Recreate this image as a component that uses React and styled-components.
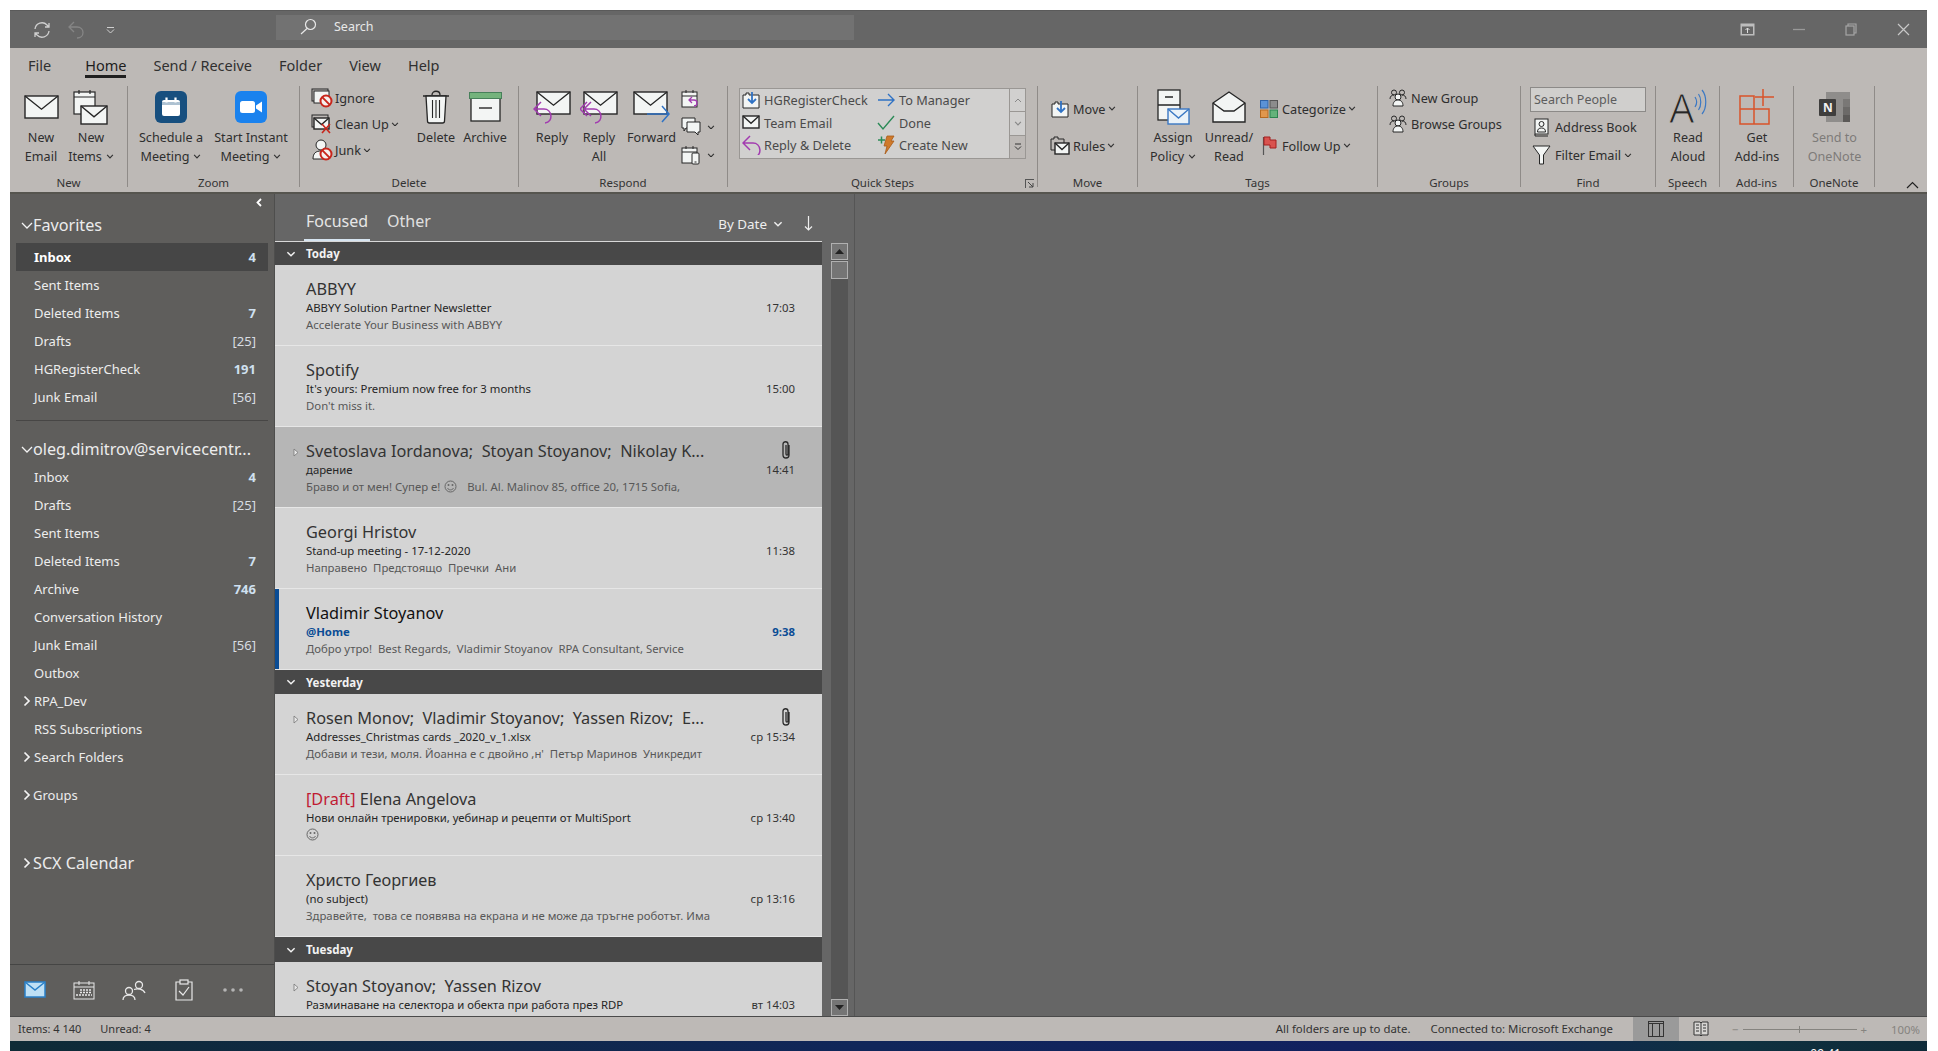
import React from "react";
import styled, { createGlobalStyle } from "styled-components";

const FONT = `"Noto Sans", "Open Sans", "Liberation Sans", sans-serif`;

const GlobalStyle = createGlobalStyle`
  html, body { margin: 0; padding: 0; background: #fff; }
  body { font-family: ${FONT}; overflow: hidden; }
  * { box-sizing: border-box; }
  svg { display: block; flex-shrink: 0; }
`;

/* ---------- icons ---------- */
const INK = "#262626";
const PAPER = "#f3f5f4";

const mail = (x, y, w, h, stroke = INK) => (
  <g>
    <rect x={x} y={y} width={w} height={h} fill={PAPER} stroke={stroke} strokeWidth="1.4" />
    <path d={`M${x} ${y}L${x + w / 2} ${y + h * 0.6}L${x + w} ${y}`} fill="none" stroke={stroke} strokeWidth="1.4" />
  </g>
);

const Chevron = ({ color = "#333", size = 8 }) => (
  <svg width={size} height={size * 0.6} viewBox="0 0 8 5"><path d="M1 1l3 3 3-3" fill="none" stroke={color} strokeWidth="1.2" /></svg>
);

const Svg = ({ w, h, children }) => <svg width={w} height={h} viewBox={`0 0 ${w} ${h}`}>{children}</svg>;

const NewEmailIcon = () => <Svg w={35} h={26}>{mail(1, 2, 33, 22)}</Svg>;
const NewItemsIcon = () => (
  <Svg w={36} h={36}>
    <rect x="1" y="3" width="21" height="22" fill={PAPER} stroke={INK} strokeWidth="1.2" />
    <path d="M1 8h21M6 1v4M17 1v4" stroke={INK} strokeWidth="1.2" />
    {mail(8, 17, 26, 18)}
  </Svg>
);
const ScheduleIcon = () => (
  <Svg w={32} h={32}>
    <rect width="32" height="32" rx="6" fill="#174f7f" />
    <rect x="7" y="9" width="18" height="16" rx="2" fill="#fff" />
    <rect x="7" y="11" width="18" height="3" fill="#174f7f" opacity="0.35" />
    <path d="M11.5 6.5v5M20.5 6.5v5" stroke="#fff" strokeWidth="2.2" />
  </Svg>
);
const StartIcon = () => (
  <Svg w={32} h={32}>
    <rect width="32" height="32" rx="6" fill="#1a82ee" />
    <rect x="5" y="10" width="15" height="12" rx="2.5" fill="#fff" />
    <path d="M21 14.5l6-4v11l-6-4z" fill="#fff" />
  </Svg>
);
const noSign = (cx, cy, r = 5.5) => (
  <g>
    <circle cx={cx} cy={cy} r={r} fill="#f6f0ee" stroke="#c8261c" strokeWidth="2" />
    <path d={`M${cx - r * 0.7} ${cy - r * 0.7}L${cx + r * 0.7} ${cy + r * 0.7}`} stroke="#c8261c" strokeWidth="2" />
  </g>
);
const IgnoreIcon = () => (
  <Svg w={22} h={20}>
    <rect x="1" y="1" width="16" height="12" fill="#bdb9b6" stroke={INK} />
    <rect x="3" y="3" width="15" height="12" fill={PAPER} stroke={INK} />
    {noSign(15, 13)}
  </Svg>
);
const CleanUpIcon = () => (
  <Svg w={22} h={20}>
    <rect x="1" y="1" width="16" height="12" fill="#bdb9b6" stroke={INK} />
    {mail(3, 4, 15, 11)}
    <path d="M11 10l8 9M19 10l-8 9" stroke="#c8261c" strokeWidth="1.6" />
  </Svg>
);
const JunkIcon = () => (
  <Svg w={22} h={22}>
    <circle cx="10" cy="6" r="5" fill={PAPER} stroke={INK} />
    <path d="M2 20c0-6 3-8 8-8s6 2 7 4v4z" fill={PAPER} stroke={INK} />
    {noSign(15, 15)}
  </Svg>
);
const TrashIcon = () => (
  <Svg w={28} h={34}>
    <path d="M1 6h26M10 5c0-5 8-5 8 0" fill="none" stroke={INK} strokeWidth="1.3" />
    <path d="M4 6l1.5 25c0 1 1 2 2 2h13c1 0 2-1 2-2L24 6z" fill={PAPER} stroke={INK} strokeWidth="1.3" />
    <path d="M10.5 10v18M14 10v18M17.5 10v18" stroke={INK} strokeWidth="1.1" />
  </Svg>
);
const ArchiveIcon = () => (
  <Svg w={33} h={30}>
    <rect x="2" y="5" width="29" height="24" fill={PAPER} stroke={INK} strokeWidth="1.3" />
    <rect x="0.5" y="0.5" width="32" height="6" fill="#74b37c" stroke="#47805a" />
    <path d="M10 16h13" stroke={INK} strokeWidth="1.4" />
  </Svg>
);
const replyArrow = (x, y, color = "#a23bb0") => (
  <path d={`M${x + 7} ${y}L${x} ${y + 7}L${x + 7} ${y + 14}M${x} ${y + 7}H${x + 10}C${x + 18} ${y + 7} ${x + 20} ${y + 20} ${x + 11} ${y + 21}`} fill="none" stroke={color} strokeWidth="1.5" />
);
const ReplyIcon = () => <Svg w={38} h={34}>{mail(4, 2, 33, 22)}{replyArrow(1, 12)}</Svg>;
const ReplyAllIcon = () => (
  <Svg w={38} h={34}>
    {mail(4, 2, 33, 22)}
    <path d="M7 12L0 19l7 7" fill="none" stroke="#a23bb0" strokeWidth="1.5" />
    {replyArrow(4, 12)}
  </Svg>
);
const ForwardIcon = () => (
  <Svg w={38} h={34}>
    {mail(1, 2, 33, 22)}
    <path d="M14 24h22M29 16l7 8-7 8" fill="none" stroke="#2f72c4" strokeWidth="1.5" />
  </Svg>
);
const calendarBase = (
  <g>
    <rect x="1" y="3" width="15" height="15" fill={PAPER} stroke={INK} />
    <path d="M1 7h15M5 1v3M12 1v3" stroke={INK} />
  </g>
);
const CalReplyIcon = () => (
  <Svg w={20} h={20}>
    {calendarBase}
    <path d="M11 8l-3 3 3 3M8 11h5c4 0 4 6 0 6" fill="none" stroke="#a23bb0" strokeWidth="1.3" />
  </Svg>
);
const ChatIcon = () => (
  <Svg w={20} h={20}>
    <path d="M1 1h13v10H5l-2 3v-3H1z" fill={PAPER} stroke={INK} />
    <path d="M6 5h13v10h-2v3l-3-3H6z" fill={PAPER} stroke={INK} />
  </Svg>
);
const CalPhoneIcon = () => (
  <Svg w={20} h={20}>
    {calendarBase}
    <rect x="11" y="8" width="7" height="11" rx="1" fill={PAPER} stroke={INK} />
    <path d="M13.5 17h2" stroke={INK} />
  </Svg>
);
const FolderDownIcon = () => (
  <Svg w={18} h={18}>
    <path d="M1 4h3V2h3v2h10v13H1z" fill={PAPER} stroke={INK} />
    <path d="M10 1v11M6 8l4 4 4-4" fill="none" stroke="#2f72c4" strokeWidth="1.8" />
  </Svg>
);
const ArrowRightIcon = () => (
  <Svg w={19} h={16}><path d="M1 8h16M11 2l6 6-6 6" fill="none" stroke="#2f72c4" strokeWidth="1.4" /></Svg>
);
const SmallMailIcon = () => <Svg w={19} h={15}>{mail(1, 1, 16, 12)}</Svg>;
const CheckIcon = () => (
  <Svg w={19} h={16}><path d="M1 8l5 6L17 1" fill="none" stroke="#2b8a57" strokeWidth="1.4" /></Svg>
);
const ReplySmallIcon = () => <Svg w={19} h={20}>{replyArrow(1, 1)}</Svg>;
const BoltIcon = () => (
  <Svg w={19} h={20}>
    <path d="M1 5h7M4.5 1.5v7" stroke="#2b8a57" strokeWidth="1.5" />
    <path d="M10 1h7l-3 5h3L8 19l2-8H7z" fill="#cf7a2c" stroke="#a85a18" strokeWidth="0.8" />
  </Svg>
);
const RulesIcon = () => (
  <Svg w={20} h={19}>
    <path d="M1 3h3V1h4v2h6v11H1z" fill="#bdb9b6" stroke={INK} />
    {mail(5, 7, 14, 11)}
  </Svg>
);
const PolicyIcon = () => (
  <Svg w={33} h={36}>
    <rect x="1" y="1" width="22" height="30" fill={PAPER} stroke={INK} strokeWidth="1.3" />
    <path d="M1 16h22M8 8h8" stroke={INK} strokeWidth="1.3" />
    <rect x="11" y="20" width="21" height="15" fill="#eaf2f8" stroke="#3a78c4" strokeWidth="1.4" />
    <path d="M11 20l10.5 9L32 20" fill="none" stroke="#3a78c4" strokeWidth="1.4" />
  </Svg>
);
const UnreadIcon = () => (
  <Svg w={34} h={32}>
    <path d="M1 12L17 1l16 11v19H1z" fill={PAPER} stroke={INK} strokeWidth="1.4" />
    <path d="M1 12l11 8h10l11-8" fill="none" stroke={INK} strokeWidth="1.4" />
  </Svg>
);
const CategorizeIcon = () => (
  <Svg w={18} h={18}>
    <rect x="0.5" y="0.5" width="7.5" height="7.5" fill="#5b92d6" stroke="#2f62a6" />
    <rect x="10" y="0.5" width="7.5" height="7.5" fill="#8c8c8c" stroke="#555" />
    <rect x="0.5" y="10" width="7.5" height="7.5" fill="#e0974e" stroke="#b56a22" />
    <rect x="10" y="10" width="7.5" height="7.5" fill="#63b27a" stroke="#2c8450" />
  </Svg>
);
const FlagIcon = () => (
  <Svg w={15} h={19}>
    <path d="M1.5 1v18" stroke="#555" strokeWidth="1.2" />
    <path d="M2 1h6v3h6v8H8V9H2z" fill="#d9534f" stroke="#a42020" />
  </Svg>
);
const PeopleIcon = () => (
  <Svg w={18} h={18}>
    <circle cx="5" cy="3.5" r="2.5" fill="none" stroke={INK} />
    <circle cx="13" cy="3.5" r="2.5" fill="none" stroke={INK} />
    <path d="M1 10c0-3 2-4 4-4M17 10c0-3-2-4-4-4" fill="none" stroke={INK} />
    <circle cx="9" cy="8" r="3" fill={PAPER} stroke={INK} />
    <path d="M4 17c0-4 2-6 5-6s5 2 5 6z" fill={PAPER} stroke={INK} />
  </Svg>
);
const BookIcon = () => (
  <Svg w={15} h={19}>
    <rect x="1" y="1" width="13" height="15" fill={PAPER} stroke={INK} />
    <path d="M1 16v2h13" fill="none" stroke={INK} />
    <circle cx="7.5" cy="6" r="2.5" fill="none" stroke={INK} />
    <path d="M3.5 14c0-3 1.5-4 4-4s4 1 4 4z" fill="none" stroke={INK} />
  </Svg>
);
const FunnelIcon = () => (
  <Svg w={19} h={20}>
    <path d="M1 1h17l-6.5 9v9h-4v-9z" fill={PAPER} stroke={INK} />
  </Svg>
);
const ReadAloudIcon = () => (
  <Svg w={38} h={38}>
    <text x="0" y="35" fontFamily={FONT} fontSize="40" fontWeight="400" fill={INK} stroke="#bdb9b6" strokeWidth="1.1">A</text>
    <path d="M26 9c2 3 2 7 0 10M29.5 6c3 4 3 12 0 16M33 2c5 6 5 18 0 24" fill="none" stroke="#3a78c4" strokeWidth="1.2" />
  </Svg>
);
const AddinsIcon = () => (
  <Svg w={36} h={36}>
    <path d="M1 7h14v13h15v15H1zM1 20h14v15" fill="none" stroke="#d9532a" strokeWidth="1.5" />
    <path d="M24 0v17M16 8h19" stroke="#d9532a" strokeWidth="1.5" />
  </Svg>
);
const OneNoteIcon = () => (
  <Svg w={32} h={32}>
    <rect x="7" y="1" width="24" height="30" fill="#8f8d8b" />
    <rect x="24" y="8" width="7" height="8" fill="#7a7876" />
    <rect x="24" y="16" width="7" height="8" fill="#6c6a68" />
    <rect x="24" y="24" width="7" height="7" fill="#5b5957" />
    <rect x="0" y="8" width="17" height="17" rx="1" fill="#3f3e3d" />
    <text x="4" y="21" fontFamily={FONT} fontSize="12" fontWeight="700" fill="#f2f2f2">N</text>
  </Svg>
);
const Smiley = () => (
  <Svg w={13} h={13}>
    <circle cx="6.5" cy="6.5" r="5.5" fill="none" stroke="#666" />
    <circle cx="4.5" cy="5" r="1" fill="#666" />
    <circle cx="8.5" cy="5" r="1" fill="#666" />
    <path d="M3.5 8c1 2.5 5 2.5 6 0" fill="none" stroke="#666" />
  </Svg>
);
const Clip = () => (
  <svg width="12" height="20" viewBox="0 0 12 20">
    <path d="M9 5v10c0 4-6 4-6 0V4c0-3 5-3 5 0v10c0 1.5-2 1.5-2 0V5" fill="none" stroke="#2a2a2a" strokeWidth="1.3" />
  </svg>
);
const Expander = () => (
  <svg width="6" height="9" viewBox="0 0 6 9"><path d="M1 1l4 3.5-4 3.5z" fill="#e8e8e8" stroke="#777" strokeWidth="0.8" /></svg>
);
const FolderChevron = ({ open, big }) => (
  <svg width="12" height={big ? 14 : 12} viewBox="0 0 12 12">
    <path d={open ? "M1 4l5 5 5-5" : "M3.5 1.5L8 6l-4.5 4.5"} fill="none" stroke="#f4f4f4" strokeWidth={open ? 1.3 : 1.7} />
  </svg>
);

/* ---------- window ---------- */
const Page = styled.div`
  width: 1938px;
  height: 1051px;
  padding: 10px 11px 0 10px;
  display: flex;
  flex-direction: column;
  background: #fff;
`;

const Desktop = styled.div`
  height: 10px;
  flex-shrink: 0;
  display: flex;
  justify-content: flex-end;
  overflow: hidden;
  padding-right: 86px;
  background: linear-gradient(90deg, #0f2b36 0%, #10265a 45%, #12215f 70%, #0f3140 90%, #0e2a38 100%);
`;

const ClockPeek = styled.span`
  font-size: 12px;
  line-height: 16px;
  margin-top: 5px;
  color: #fff;
`;

const TitleBar = styled.div`
  height: 38px;
  flex-shrink: 0;
  display: flex;
  align-items: center;
  background: #666;
  border-top: 1px solid #5a5a5a;
`;

const Qat = styled.div`
  width: 266px;
  padding-left: 15px;
  display: flex;
  align-items: center;
`;

const QatButton = styled.div`
  width: 34px;
  display: flex;
  justify-content: center;
  opacity: ${(p) => (p.$dim ? 0.3 : 1)};
`;

const SearchBox = styled.div`
  width: 578px;
  height: 25px;
  margin-top: -4px;
  padding: 0 0 2px 24px;
  display: flex;
  align-items: center;
  gap: 17px;
  background: #727272;
  color: #e8e8e8;
  font-size: 12.5px;
`;

const WindowControls = styled.div`
  margin-left: auto;
  display: flex;
  gap: 4px;
`;

const ControlButton = styled.div`
  width: 48px;
  display: flex;
  justify-content: center;
`;

/* ---------- ribbon ---------- */
const Ribbon = styled.div`
  height: 144px;
  flex-shrink: 0;
  position: relative;
  z-index: 1;
  background: #bdb9b6;
  color: #2e2e2e;
  box-shadow: 0 2px 0 #56554f;
`;

const Tabs = styled.div`
  height: 38px;
  padding: 1px 0 0 18px;
  display: flex;
  align-items: flex-start;
  gap: 27px;
  font-size: 14.5px;
`;

const Tab = styled.div`
  height: 29px;
  line-height: 32px;
  margin-left: ${(p) => (p.$active ? 7 : 0)}px;
  color: ${(p) => (p.$active ? "#1d1d1d" : "#303030")};
  border-bottom: ${(p) => (p.$active ? "3px solid #1f1f1f" : "none")};
`;

const Groups = styled.div`
  display: flex;
  height: 101px;
`;

const Group = styled.section`
  width: ${(p) => p.$w}px;
  flex-shrink: 0;
  display: flex;
  flex-direction: column;
  position: relative;
  border-right: 1px solid #8f8b88;
`;

const GroupBody = styled.div`
  flex: 1;
  min-height: 0;
  display: flex;
  padding-left: ${(p) => p.$pad || 0}px;
`;

const GroupLabel = styled.div`
  height: 16px;
  margin-bottom: -4px;
  line-height: 16px;
  text-align: center;
  font-size: 11.5px;
  color: #333;
`;

const BigButton = styled.div`
  width: ${(p) => p.$w}px;
  flex-shrink: 0;
  display: flex;
  flex-direction: column;
  align-items: center;
  color: ${(p) => (p.$dim ? "#7d7b79" : "inherit")};
`;

const BigIcon = styled.div`
  height: 42px;
  display: flex;
  align-items: center;
  justify-content: center;
`;

const BigLabel = styled.div`
  font-size: 12.6px;
  line-height: 19px;
  text-align: center;
  white-space: nowrap;
  display: flex;
  flex-direction: column;
  align-items: center;
`;

const LabelLine = styled.span`
  display: flex;
  align-items: center;
  gap: 4px;
`;

const Stack = styled.div`
  width: ${(p) => (p.$w ? `${p.$w}px` : "auto")};
  display: flex;
  flex-direction: column;
  padding-top: ${(p) => p.$top || 0}px;
  margin-top: ${(p) => p.$up || 0}px;
`;

const SmallItem = styled.div`
  height: ${(p) => p.$h || 26}px;
  display: flex;
  align-items: center;
  gap: ${(p) => p.$gap ?? 2}px;
  font-size: 12.7px;
  white-space: nowrap;
`;

const SmallIconSlot = styled.span`
  width: ${(p) => p.$w || 22}px;
  display: flex;
  justify-content: center;
`;

const Gallery = styled.div`
  width: 287px;
  height: 71px;
  margin: 2px 0 0 11px;
  display: flex;
  background: #d1d0cf;
  border: 1px solid #9a9794;
`;

const GalleryGrid = styled.div`
  flex: 1;
  display: grid;
  grid-template-columns: 135px 1fr;
  grid-auto-rows: 22.5px;
  color: #4a4a4a;
  font-size: 12.7px;
`;

const GalleryItem = styled.div`
  display: flex;
  align-items: center;
  gap: 2px;
  white-space: nowrap;
`;

const GalleryScroll = styled.div`
  width: 16px;
  display: flex;
  flex-direction: column;
  border-left: 1px solid #9a9794;
`;

const GalleryArrow = styled.div`
  flex: 1;
  display: flex;
  align-items: center;
  justify-content: center;
  background: ${(p) => (p.$solid ? "#bdb9b6" : "transparent")};
  border-bottom: ${(p) => (p.$solid ? "none" : "1px solid #9a9794")};
`;

const Launcher = styled.div`
  position: absolute;
  right: 3px;
  bottom: -1px;
  width: 9px;
  height: 9px;
  border-left: 1px solid #555;
  border-top: 1px solid #555;
`;

const PeopleSearch = styled.div`
  width: 116px;
  height: 25px;
  margin: 1px 0 1px;
  padding-left: 3px;
  line-height: 23px;
  font-size: 12.5px;
  color: #5d5d5d;
  background: #d0cfcd;
  border: 1px solid #8c8a88;
`;

const Collapse = styled.div`
  position: absolute;
  right: 8px;
  bottom: 3px;
`;

/* ---------- main area ---------- */
const Main = styled.main`
  flex: 1;
  min-height: 0;
  display: flex;
  background: #666;
`;

const Sidebar = styled.nav`
  width: 265px;
  flex-shrink: 0;
  padding-left: 6px;
  display: flex;
  flex-direction: column;
  background: #5f5e5c;
  color: #ededed;
  border-right: 1px solid #4e4e4d;
`;

const SidebarCollapse = styled.div`
  height: 17px;
  padding: 6px 12px 0 0;
  display: flex;
  justify-content: flex-end;
`;

const FolderHead = styled.div`
  height: ${(p) => p.$h || 28}px;
  display: flex;
  align-items: center;
  margin-top: ${(p) => p.$mt || 0}px;
  margin-bottom: ${(p) => p.$mb || 0}px;
  padding-left: 5px;
  width: 252px;
  font-size: ${(p) => (p.$big ? 16.2 : 13)}px;
  color: #ececec;
  white-space: nowrap;
`;

const FolderRow = styled.div`
  width: 252px;
  height: 28px;
  padding: 0 12px 0 18px;
  display: flex;
  align-items: center;
  justify-content: space-between;
  font-size: 13px;
  font-weight: ${(p) => (p.$selected ? 700 : 400)};
  color: ${(p) => (p.$selected ? "#fff" : "#ededed")};
  background: ${(p) => (p.$selected ? "#464646" : "transparent")};
`;

const FolderCount = styled.span`
  font-weight: ${(p) => (p.$bracket ? 400 : 700)};
  color: ${(p) => (p.$bracket ? "#d8dde2" : "#cfe0f0")};
`;

const FolderTitle = styled.span`
  display: flex;
  align-items: center;
  margin-left: ${(p) => (p.$indent ? -13 : 0)}px;
  gap: 1px;
`;

const SidebarRule = styled.div`
  width: 252px;
  height: 1px;
  margin: 9px 0 14px;
  background: #474645;
`;

const NavBar = styled.div`
  margin-top: auto;
  margin-left: -6px;
  height: 52px;
  padding-bottom: 2px;
  display: flex;
  align-items: center;
  border-top: 1px solid #454544;
`;

const NavButton = styled.div`
  width: 49.6px;
  display: flex;
  justify-content: center;
`;

const ListPane = styled.section`
  width: 580px;
  flex-shrink: 0;
  display: flex;
  flex-direction: column;
  background: #666;
  border-right: 1px solid #555;
`;

const ListHead = styled.div`
  width: 547px;
  height: 50px;
  flex-shrink: 0;
  padding-left: 29px;
  display: flex;
  align-items: stretch;
  color: #eee;
  border-bottom: 1px solid #d8d8d8;
`;

const ListTab = styled.div`
  margin-right: 15px;
  padding: 16px 2px 0;
  font-size: 16px;
  line-height: 26px;
  color: ${(p) => (p.$active ? "#e6e6e6" : "#e0e0e0")};
  border-bottom: ${(p) => (p.$active ? "2px solid #d6e4f0" : "none")};
`;

const SortBox = styled.div`
  margin-left: auto;
  padding: 18px 9px 0 0;
  display: flex;
  align-items: flex-start;
  gap: 6px;
  font-size: 13.4px;
  line-height: 28px;
`;

const SortChevron = styled.span`
  padding-top: 11px;
  margin-right: 15px;
`;

const SortArrow = styled.span`
  padding-top: 6px;
`;

const ListBody = styled.div`
  flex: 1;
  min-height: 0;
  display: flex;
`;

const Messages = styled.div`
  width: 547px;
  flex-shrink: 0;
  overflow: hidden;
`;

const DateBar = styled.div`
  height: ${(p) => p.$h || 24}px;
  padding-left: 11px;
  display: flex;
  align-items: center;
  gap: 10px;
  background: #484848;
  color: #f2f2f2;
  font-size: 11.5px;
  font-weight: 700;
`;

const Message = styled.article`
  height: 81px;
  display: flex;
  background: ${(p) => (p.$selected ? "#b6b6b6" : "#d4d4d4")};
  border-bottom: 1px solid #e6e6e6;
  box-shadow: ${(p) => (p.$unread ? "inset 4px 0 0 #0a4c94" : "none")};
`;

const Gutter = styled.div`
  width: 31px;
  flex-shrink: 0;
  padding: 21px 0 0 18px;
`;

const MessageBody = styled.div`
  flex: 1;
  min-width: 0;
  padding-top: 13px;
`;

const Sender = styled.div`
  height: 21px;
  line-height: 23px;
  font-size: 16.3px;
  color: ${(p) => (p.$unread ? "#111" : "#333")};
  white-space: pre;
`;

const DraftTag = styled.span`
  color: #c01b33;
`;

const Subject = styled.div`
  height: 17px;
  line-height: 17px;
  font-size: 11.35px;
  font-weight: ${(p) => (p.$unread ? 700 : 400)};
  color: ${(p) => (p.$unread ? "#0a4c94" : "#262626")};
  white-space: pre;
`;

const Preview = styled.div`
  height: 17px;
  display: flex;
  align-items: center;
  gap: 4px;
  font-size: 11.35px;
  color: #585858;
  white-space: pre;
`;

const MessageSide = styled.div`
  width: 100px;
  flex-shrink: 0;
  padding: 13px 27px 0 0;
  display: flex;
  flex-direction: column;
  align-items: flex-end;
`;

const ClipSlot = styled.div`
  height: 21px;
  padding-right: 3px;
`;

const Time = styled.div`
  height: 17px;
  line-height: 17px;
  font-size: 11.35px;
  font-weight: ${(p) => (p.$unread ? 700 : 400)};
  color: ${(p) => (p.$unread ? "#0a4c94" : "#333")};
`;

const Scrollbar = styled.div`
  width: 17px;
  margin: 1px 0 0 9px;
  display: flex;
  flex-direction: column;
  background: #555;
`;

const ScrollBtn = styled.div`
  height: ${(p) => p.$h}px;
  flex-shrink: 0;
  margin-bottom: ${(p) => p.$mb || 0}px;
  margin-top: ${(p) => (p.$end ? "auto" : 0)};
  display: flex;
  align-items: center;
  justify-content: center;
  background: #757575;
  border: 1px solid #b0b0b0;
`;

const ReadingPane = styled.div`
  flex: 1;
  background: #666;
`;

/* ---------- status ---------- */
const StatusBar = styled.footer`
  height: 25px;
  flex-shrink: 0;
  display: flex;
  align-items: stretch;
  padding-left: 8px;
  background: #bdb9b6;
  color: #333;
  font-size: 11px;
  border-top: 1px solid #4a4a4a;
`;

const StatusText = styled.span`
  line-height: 23px;
  margin-right: ${(p) => p.$mr || 0}px;
  white-space: nowrap;
`;

const StatusRight = styled.div`
  margin-left: auto;
  display: flex;
  align-items: stretch;
  font-size: 11.4px;
`;

const ViewButton = styled.div`
  width: 45.5px;
  display: flex;
  align-items: center;
  justify-content: center;
  background: ${(p) => (p.$active ? "#9a9a9a" : "transparent")};
`;

const ZoomArea = styled.div`
  width: 203px;
  padding: 0 7px 0 8px;
  display: flex;
  align-items: center;
  gap: 4px;
  color: #85837f;
`;

const ZoomTrack = styled.div`
  width: 114px;
  height: 1px;
  background: #85837f;
  position: relative;
`;

const ZoomTick = styled.span`
  position: absolute;
  left: 56px;
  top: -3px;
  width: 1px;
  height: 7px;
  background: #85837f;
`;

const ZoomPct = styled.span`
  margin-left: auto;
`;

/* ---------- data ---------- */
const favorites = [
  { name: "Inbox", count: "4", selected: true },
  { name: "Sent Items" },
  { name: "Deleted Items", count: "7" },
  { name: "Drafts", count: "[25]" },
  { name: "HGRegisterCheck", count: "191" },
  { name: "Junk Email", count: "[56]" },
];

const accountFolders = [
  { name: "Inbox", count: "4" },
  { name: "Drafts", count: "[25]" },
  { name: "Sent Items" },
  { name: "Deleted Items", count: "7" },
  { name: "Archive", count: "746" },
  { name: "Conversation History" },
  { name: "Junk Email", count: "[56]" },
  { name: "Outbox" },
  { name: "RPA_Dev", closed: true },
  { name: "RSS Subscriptions" },
  { name: "Search Folders", closed: true },
];

const today = [
  { sender: "ABBYY", subject: "ABBYY Solution Partner Newsletter", preview: "Accelerate Your Business with ABBYY", time: "17:03" },
  { sender: "Spotify", subject: "It's yours: Premium now free for 3 months", preview: "Don't miss it.", time: "15:00" },
  {
    sender: "Svetoslava Iordanova;  Stoyan Stoyanov;  Nikolay K...",
    subject: "дарение",
    preview: "Браво и от мен! Супер е!",
    smiley: true,
    previewEnd: "  Bul. Al. Malinov 85, office 20, 1715 Sofia,",
    time: "14:41",
    thread: true,
    clip: true,
    selected: true,
  },
  { sender: "Georgi Hristov", subject: "Stand-up meeting - 17-12-2020", preview: "Направено  Предстоящо  Пречки  Ани", time: "11:38" },
  { sender: "Vladimir Stoyanov", subject: "@Home", preview: "Добро утро!  Best Regards,  Vladimir Stoyanov  RPA Consultant, Service", time: "9:38", unread: true },
];

const yesterday = [
  {
    sender: "Rosen Monov;  Vladimir Stoyanov;  Yassen Rizov;  E...",
    subject: "Addresses_Christmas cards _2020_v_1.xlsx",
    preview: "Добави и тези, моля. Йоанна е с двойно ,н'  Петър Маринов  Уникредит",
    time: "ср 15:34",
    thread: true,
    clip: true,
  },
  { draft: true, sender: " Elena Angelova", subject: "Нови онлайн тренировки, уебинар и рецепти от MultiSport", smiley: true, time: "ср 13:40" },
  { sender: "Христо Георгиев", subject: "(no subject)", preview: "Здравейте,  това се появява на екрана и не може да тръгне роботът. Има", time: "ср 13:16" },
];

const tuesday = [
  { sender: "Stoyan Stoyanov;  Yassen Rizov", subject: "Разминаване на селектора и обекта при работа през RDP", time: "вт 14:03", thread: true },
];

/* ---------- pieces ---------- */
function Folder({ item }) {
  const bracket = item.count && item.count.startsWith("[");
  return (
    <FolderRow $selected={item.selected}>
      <FolderTitle $indent={item.closed}>
        {item.closed && <FolderChevron />}
        {item.name}
      </FolderTitle>
      {item.count && <FolderCount $bracket={bracket}>{item.count}</FolderCount>}
    </FolderRow>
  );
}

function MessageRow({ m }) {
  return (
    <Message $selected={m.selected} $unread={m.unread}>
      <Gutter>{m.thread && <Expander />}</Gutter>
      <MessageBody>
        <Sender $unread={m.unread}>
          {m.draft && <DraftTag>[Draft]</DraftTag>}
          {m.sender}
        </Sender>
        <Subject $unread={m.unread}>{m.subject}</Subject>
        <Preview>
          {m.preview}
          {m.smiley && <Smiley />}
          {m.previewEnd}
        </Preview>
      </MessageBody>
      <MessageSide>
        <ClipSlot>{m.clip && <Clip />}</ClipSlot>
        <Time $unread={m.unread}>{m.time}</Time>
      </MessageSide>
    </Message>
  );
}

function DateHeader({ label, h }) {
  return (
    <DateBar $h={h}>
      <Chevron color="#f2f2f2" size={10} />
      {label}
    </DateBar>
  );
}

function Big({ w, icon, lines, caret, dim }) {
  return (
    <BigButton $w={w} $dim={dim}>
      <BigIcon>{icon}</BigIcon>
      <BigLabel>
        {lines.map((line, i) => (
          <LabelLine key={line}>
            {line}
            {caret && i === lines.length - 1 && <Chevron />}
          </LabelLine>
        ))}
      </BigLabel>
    </BigButton>
  );
}

function Small({ icon, label, caret, h, w, gap }) {
  return (
    <SmallItem $h={h} $gap={gap}>
      <SmallIconSlot $w={w}>{icon}</SmallIconSlot>
      {label}
      {caret && <Chevron />}
    </SmallItem>
  );
}

export default function App() {
  return (
    <Page>
      <GlobalStyle />
      <TitleBar>
        <Qat>
          <QatButton>
            <svg width="18" height="18" viewBox="0 0 18 18" fill="none" stroke="#cfcfcf" strokeWidth="1.3">
              <path d="M2 8a7 7 0 0 1 12-4l2 2M16 2v4h-4M16 10a7 7 0 0 1-12 4l-2-2M2 16v-4h4" />
            </svg>
          </QatButton>
          <QatButton $dim>
            <svg width="17" height="18" viewBox="0 0 17 18" fill="none" stroke="#cfcfcf" strokeWidth="1.3">
              <path d="M6 1L1 6l5 5M1 6h8c8 0 8 11 0 11" />
            </svg>
          </QatButton>
          <QatButton>
            <svg width="9" height="8" viewBox="0 0 9 8" fill="none" stroke="#d0d0d0"><path d="M1 1.5h7M1 3.5l3.5 3.5L8 3.5" /></svg>
          </QatButton>
        </Qat>
        <SearchBox>
          <svg width="17" height="17" viewBox="0 0 17 17" fill="none" stroke="#e8e8e8" strokeWidth="1.2">
            <circle cx="10.5" cy="6.5" r="5" />
            <path d="M7 10.5L1 16" />
          </svg>
          Search
        </SearchBox>
        <WindowControls>
          <ControlButton>
            <svg width="15" height="13" viewBox="0 0 15 13">
              <rect x="0.5" y="0.5" width="14" height="12" fill="#bdbdbd" />
              <rect x="2" y="3.5" width="11" height="7.5" fill="#666" />
              <path d="M7.5 10V5M5.5 7l2-2 2 2" fill="none" stroke="#ddd" />
            </svg>
          </ControlButton>
          <ControlButton>
            <svg width="12" height="12" viewBox="0 0 12 12"><path d="M0 6.5h12" stroke="#999" strokeWidth="1.3" /></svg>
          </ControlButton>
          <ControlButton>
            <svg width="12" height="13" viewBox="0 0 12 13" fill="none" stroke="#a5a5a5" strokeWidth="1.2">
              <rect x="1" y="3" width="8" height="9" />
              <path d="M3 3V1h8v9H9" />
            </svg>
          </ControlButton>
          <ControlButton>
            <svg width="13" height="13" viewBox="0 0 13 13"><path d="M1 1l11 11M12 1L1 12" stroke="#c8c8c8" strokeWidth="1.2" /></svg>
          </ControlButton>
        </WindowControls>
      </TitleBar>

      <Ribbon>
        <Tabs>
          <Tab>File</Tab>
          <Tab $active>Home</Tab>
          <Tab>Send / Receive</Tab>
          <Tab>Folder</Tab>
          <Tab>View</Tab>
          <Tab>Help</Tab>
        </Tabs>
        <Groups>
          <Group $w={118}>
            <GroupBody $pad={6}>
              <Big w={50} icon={<NewEmailIcon />} lines={["New", "Email"]} />
              <Big w={50} icon={<NewItemsIcon />} lines={["New", "Items"]} caret />
            </GroupBody>
            <GroupLabel>New</GroupLabel>
          </Group>
          <Group $w={172}>
            <GroupBody $pad={2}>
              <Big w={82} icon={<ScheduleIcon />} lines={["Schedule a", "Meeting"]} caret />
              <Big w={78} icon={<StartIcon />} lines={["Start Instant", "Meeting"]} caret />
            </GroupBody>
            <GroupLabel>Zoom</GroupLabel>
          </Group>
          <Group $w={219}>
            <GroupBody $pad={11}>
              <Stack $w={100} $up={-1}>
                <Small icon={<IgnoreIcon />} label="Ignore" />
                <Small icon={<CleanUpIcon />} label="Clean Up" caret />
                <Small icon={<JunkIcon />} label="Junk" caret />
              </Stack>
              <Big w={50} icon={<TrashIcon />} lines={["Delete"]} />
              <Big w={48} icon={<ArchiveIcon />} lines={["Archive"]} />
            </GroupBody>
            <GroupLabel>Delete</GroupLabel>
          </Group>
          <Group $w={209}>
            <GroupBody $pad={10}>
              <Big w={46} icon={<ReplyIcon />} lines={["Reply"]} />
              <Big w={48} icon={<ReplyAllIcon />} lines={["Reply", "All"]} />
              <Big w={57} icon={<ForwardIcon />} lines={["Forward"]} />
              <Stack $up={-1}>
                <Small icon={<CalReplyIcon />} h={28} />
                <Small icon={<ChatIcon />} caret h={28} gap={5} />
                <Small icon={<CalPhoneIcon />} caret h={28} gap={5} />
              </Stack>
            </GroupBody>
            <GroupLabel>Respond</GroupLabel>
          </Group>
          <Group $w={310}>
            <GroupBody>
              <Gallery>
                <GalleryGrid>
                  <GalleryItem><SmallIconSlot><FolderDownIcon /></SmallIconSlot>HGRegisterCheck</GalleryItem>
                  <GalleryItem><SmallIconSlot><ArrowRightIcon /></SmallIconSlot>To Manager</GalleryItem>
                  <GalleryItem><SmallIconSlot><SmallMailIcon /></SmallIconSlot>Team Email</GalleryItem>
                  <GalleryItem><SmallIconSlot><CheckIcon /></SmallIconSlot>Done</GalleryItem>
                  <GalleryItem><SmallIconSlot><ReplySmallIcon /></SmallIconSlot>Reply &amp; Delete</GalleryItem>
                  <GalleryItem><SmallIconSlot><BoltIcon /></SmallIconSlot>Create New</GalleryItem>
                </GalleryGrid>
                <GalleryScroll>
                  <GalleryArrow><svg width="8" height="5" viewBox="0 0 8 5"><path d="M1 4l3-3 3 3" fill="none" stroke="#888" /></svg></GalleryArrow>
                  <GalleryArrow><Chevron color="#888" /></GalleryArrow>
                  <GalleryArrow $solid><svg width="8" height="8" viewBox="0 0 8 8" fill="none" stroke="#333"><path d="M1 1h6M1 3.5l3 3 3-3" /></svg></GalleryArrow>
                </GalleryScroll>
              </Gallery>
              <Launcher>
                <svg width="8" height="8" viewBox="0 0 8 8"><path d="M2 2l5 5M7 3v4H3" fill="none" stroke="#444" /></svg>
              </Launcher>
            </GroupBody>
            <GroupLabel>Quick Steps</GroupLabel>
          </Group>
          <Group $w={100}>
            <GroupBody $pad={11}>
              <Stack $top={4}>
                <Small icon={<FolderDownIcon />} label="Move" caret h={37} />
                <Small icon={<RulesIcon />} label="Rules" caret h={37} />
              </Stack>
            </GroupBody>
            <GroupLabel>Move</GroupLabel>
          </Group>
          <Group $w={240}>
            <GroupBody $pad={8}>
              <Big w={54} icon={<PolicyIcon />} lines={["Assign", "Policy"]} caret />
              <Big w={58} icon={<UnreadIcon />} lines={["Unread/", "Read"]} />
              <Stack $top={4}>
                <Small icon={<CategorizeIcon />} label="Categorize" caret h={37} />
                <Small icon={<FlagIcon />} label="Follow Up" caret h={37} />
              </Stack>
            </GroupBody>
            <GroupLabel>Tags</GroupLabel>
          </Group>
          <Group $w={143}>
            <GroupBody $pad={9}>
              <Stack $up={-1}>
                <Small icon={<PeopleIcon />} label="New Group" />
                <Small icon={<PeopleIcon />} label="Browse Groups" />
              </Stack>
            </GroupBody>
            <GroupLabel>Groups</GroupLabel>
          </Group>
          <Group $w={135}>
            <GroupBody $pad={9}>
              <Stack>
                <PeopleSearch>Search People</PeopleSearch>
                <Small icon={<BookIcon />} label="Address Book" h={28} gap={3} />
                <Small icon={<FunnelIcon />} label="Filter Email" caret h={28} gap={3} />
              </Stack>
            </GroupBody>
            <GroupLabel>Find</GroupLabel>
          </Group>
          <Group $w={64}>
            <GroupBody>
              <Big w={64} icon={<ReadAloudIcon />} lines={["Read", "Aloud"]} />
            </GroupBody>
            <GroupLabel>Speech</GroupLabel>
          </Group>
          <Group $w={74}>
            <GroupBody>
              <Big w={74} icon={<AddinsIcon />} lines={["Get", "Add-ins"]} />
            </GroupBody>
            <GroupLabel>Add-ins</GroupLabel>
          </Group>
          <Group $w={81}>
            <GroupBody>
              <Big w={81} dim icon={<OneNoteIcon />} lines={["Send to", "OneNote"]} />
            </GroupBody>
            <GroupLabel>OneNote</GroupLabel>
          </Group>
        </Groups>
        <Collapse>
          <svg width="13" height="8" viewBox="0 0 13 8"><path d="M1 7l5.500-5.500L12 7" fill="none" stroke="#222" strokeWidth="1.2" /></svg>
        </Collapse>
      </Ribbon>

      <Main>
        <Sidebar>
          <SidebarCollapse>
            <svg width="6" height="9" viewBox="0 0 6 9"><path d="M5 1L1.5 4.5 5 8" fill="none" stroke="#fff" strokeWidth="1.8" /></svg>
          </SidebarCollapse>
          <FolderHead $big $h={32} $mb={2}><FolderChevron open big />Favorites</FolderHead>
          {favorites.map((f) => <Folder key={f.name} item={f} />)}
          <SidebarRule />
          <FolderHead $big $h={28}><FolderChevron open big />oleg.dimitrov@servicecentr...</FolderHead>
          {accountFolders.map((f) => <Folder key={f.name} item={f} />)}
          <FolderHead $mt={10}><FolderChevron />Groups</FolderHead>
          <FolderHead $big $h={32} $mt={38}><FolderChevron big />SCX Calendar</FolderHead>
          <NavBar>
            <NavButton>
              <svg width="22" height="17" viewBox="0 0 22 17">
                <rect x="1" y="1" width="20" height="15" fill="#bfe0f5" stroke="#2a80c8" strokeWidth="1.5" />
                <path d="M1 1l10 8 10-8" fill="none" stroke="#2a80c8" strokeWidth="1.5" />
              </svg>
            </NavButton>
            <NavButton>
              <svg width="22" height="20" viewBox="0 0 22 20" fill="none" stroke="#e8e8e8">
                <rect x="1" y="3" width="20" height="16" />
                <path d="M1 7h20M6 1v4M16 1v4" />
                <path d="M7 10h12M7 12.5h12M3 15h16" strokeWidth="1.6" strokeDasharray="2 1" />
              </svg>
            </NavButton>
            <NavButton>
              <svg width="24" height="20" viewBox="0 0 24 20" fill="none" stroke="#e8e8e8" strokeWidth="1.3">
                <circle cx="7" cy="11" r="3.5" />
                <path d="M1 20c0-3 2.5-5 6-5s6 2 6 5" />
                <circle cx="17" cy="5" r="3.5" />
                <path d="M12 9.5c3-1 9-1 11 3.5" />
              </svg>
            </NavButton>
            <NavButton>
              <svg width="18" height="22" viewBox="0 0 18 22" fill="none" stroke="#e8e8e8" strokeWidth="1.2">
                <path d="M5 3H1v18h16V3h-4" />
                <rect x="5" y="1" width="8" height="4" />
                <path d="M4 12l4 4 6-8" />
              </svg>
            </NavButton>
            <NavButton>
              <svg width="20" height="4" viewBox="0 0 20 4" fill="#b4b4b4">
                <circle cx="2" cy="2" r="1.8" /><circle cx="10" cy="2" r="1.8" /><circle cx="18" cy="2" r="1.8" />
              </svg>
            </NavButton>
          </NavBar>
        </Sidebar>

        <ListPane>
          <ListHead>
            <ListTab $active>Focused</ListTab>
            <ListTab>Other</ListTab>
            <SortBox>
              By Date
              <SortChevron><Chevron color="#eee" size={10} /></SortChevron>
              <SortArrow>
                <svg width="9" height="15" viewBox="0 0 9 15"><path d="M4.5 0v14M1 10.5l3.5 3.5L8 10.5" fill="none" stroke="#eee" strokeWidth="1.2" /></svg>
              </SortArrow>
            </SortBox>
          </ListHead>
          <ListBody>
            <Messages>
              <DateHeader label="Today" h={23} />
              {today.map((m) => <MessageRow key={m.sender} m={m} />)}
              <DateHeader label="Yesterday" />
              {yesterday.map((m) => <MessageRow key={m.sender} m={m} />)}
              <DateHeader label="Tuesday" h={25} />
              {tuesday.map((m) => <MessageRow key={m.sender} m={m} />)}
            </Messages>
            <Scrollbar>
              <ScrollBtn $h={17} $mb={1}>
                <svg width="9" height="5" viewBox="0 0 9 5"><path d="M0 5l4.5-5L9 5z" fill="#222" /></svg>
              </ScrollBtn>
              <ScrollBtn $h={18} />
              <ScrollBtn $h={17} $end>
                <svg width="9" height="5" viewBox="0 0 9 5"><path d="M0 0l4.5 5L9 0z" fill="#222" /></svg>
              </ScrollBtn>
            </Scrollbar>
          </ListBody>
        </ListPane>
        <ReadingPane />
      </Main>

      <StatusBar>
        <StatusText $mr={19}>Items: 4 140</StatusText>
        <StatusText>Unread: 4</StatusText>
        <StatusRight>
          <StatusText $mr={20}>All folders are up to date.</StatusText>
          <StatusText $mr={20}>Connected to: Microsoft Exchange</StatusText>
          <ViewButton $active>
            <svg width="16" height="16" viewBox="0 0 16 16" fill="none" stroke="#333">
              <rect x="0.5" y="0.5" width="15" height="15" />
              <path d="M0 2.5h16M4.5 3v13M11.5 3v13" />
            </svg>
          </ViewButton>
          <ViewButton>
            <svg width="16" height="17" viewBox="0 0 16 17" fill="#d8d6d4" stroke="#333">
              <path d="M1 1h6l1 1 1-1h6v13H9l-1 1-1-1H1zM8 2v13" />
              <path d="M3 4h3M3 7h3M3 10h3M10 4h3M10 7h3M10 10h3" />
            </svg>
          </ViewButton>
          <ZoomArea>
            −
            <ZoomTrack><ZoomTick /></ZoomTrack>
            +
            <ZoomPct>100%</ZoomPct>
          </ZoomArea>
        </StatusRight>
      </StatusBar>
      <Desktop><ClockPeek>09:41</ClockPeek></Desktop>
    </Page>
  );
}
